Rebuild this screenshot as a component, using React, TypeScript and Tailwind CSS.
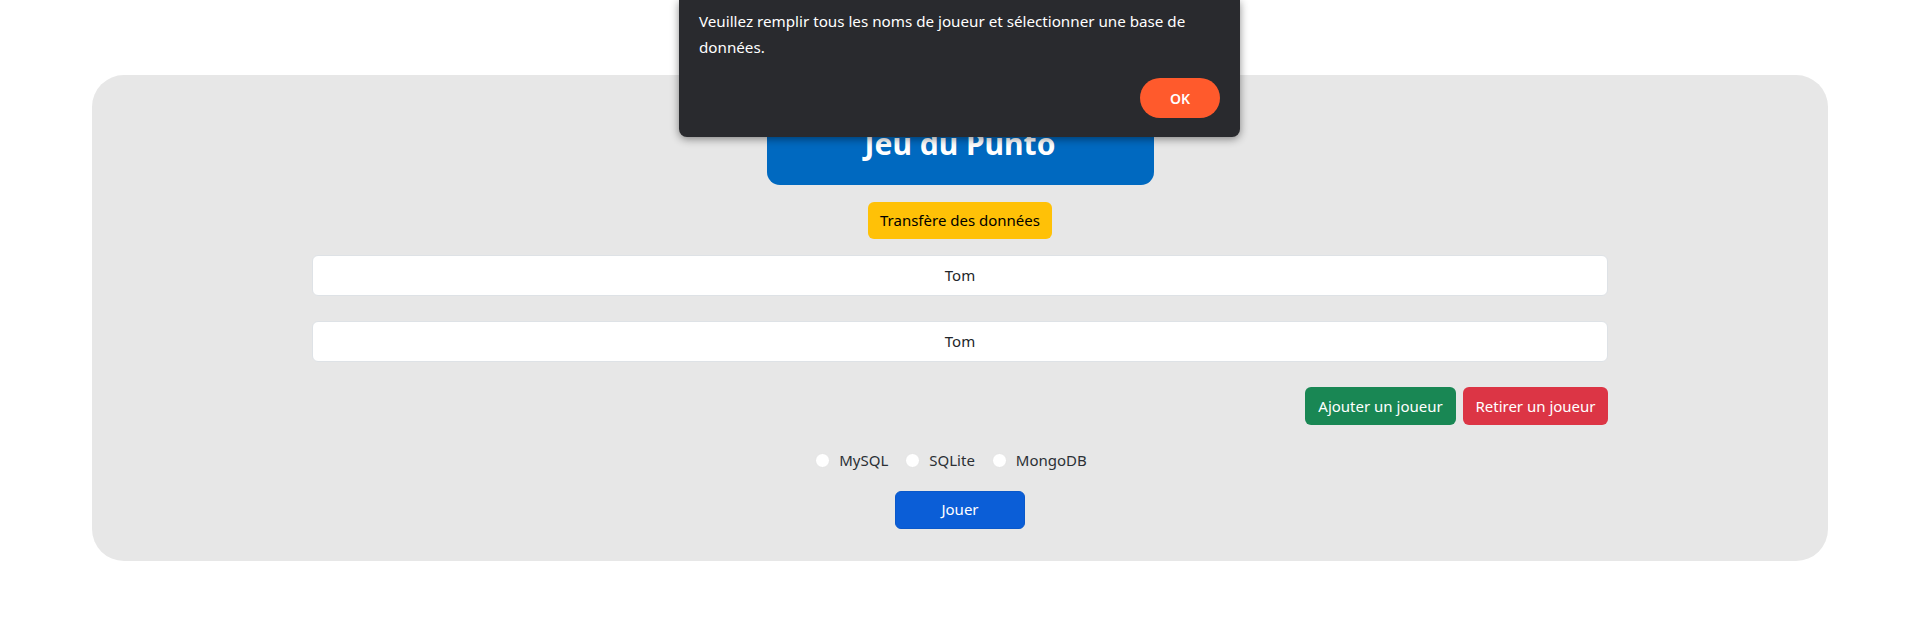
import React from "react";

export default function App() {
  const font = { fontFamily: '"Noto Sans", "Open Sans", sans-serif' };
  return (
    <div className="relative min-h-[638px] w-[1920px] bg-white text-[#212529]" style={font}>
      <div className="h-[75px]" />
      <div className="mx-[92px] flex flex-col items-center rounded-[32px] bg-[#e7e7e7] pt-[28px] pb-[32px]">
        <div className="flex h-[82px] w-[387px] items-center justify-center rounded-[13px] bg-[#0069c0] pb-[2px] text-[30px] font-bold text-white">
          Jeu du Punto
        </div>
        <button className="mt-[17px] h-[37px] rounded-[6px] bg-[#ffc107] px-[12px] text-[15px] text-black">
          Transfère des données
        </button>
        <div className="mt-[16px] flex w-[1296px] flex-col gap-[25px]">
          <div className="flex h-[41px] items-center justify-center rounded-[6px] border border-[#dee2e6] bg-white text-[15px]">
            Tom
          </div>
          <div className="flex h-[41px] items-center justify-center rounded-[6px] border border-[#dee2e6] bg-white text-[15px]">
            Tom
          </div>
          <div className="flex justify-end gap-[7px]">
            <button className="h-[38px] w-[151px] rounded-[6px] bg-[#198754] text-[15px] text-white">
              Ajouter un joueur
            </button>
            <button className="h-[38px] w-[145px] rounded-[6px] bg-[#dc3545] text-[15px] text-white">
              Retirer un joueur
            </button>
          </div>
        </div>
        <div className="mt-[24px] flex items-center pr-[18px] text-[15px] text-[#2b3035]">
          {["MySQL", "SQLite", "MongoDB"].map((l, i) => (
            <label key={l} className={`flex items-center gap-[9px] ${i > 0 ? "ml-[17px]" : ""}`}>
              <span className="block h-[15px] w-[15px] rounded-full border border-[#e4e4e4] bg-white" />
              <span>{l}</span>
            </label>
          ))}
        </div>
        <button className="mt-[19px] h-[38px] w-[130px] rounded-[6px] border border-[#0a58ca] bg-[#0b5ed7] text-[15px] text-white">
          Jouer
        </button>
      </div>

      <div className="absolute left-[679px] top-0 flex h-[137px] w-[561px] flex-col rounded-b-[8px] bg-[#292a2e] px-[20px] pt-[8px] pb-[19px] shadow-[0_2px_8px_rgba(0,0,0,0.45)]">
        <p className="text-[15.2px] leading-[26px] text-white">
          Veuillez remplir tous les noms de joueur et sélectionner une base de données.
        </p>
        <div className="mt-auto flex justify-end">
          <button className="h-[40px] w-[80px] rounded-full bg-[#ff5a2c] text-[14px] font-semibold text-white">
            OK
          </button>
        </div>
      </div>
    </div>
  );
}
